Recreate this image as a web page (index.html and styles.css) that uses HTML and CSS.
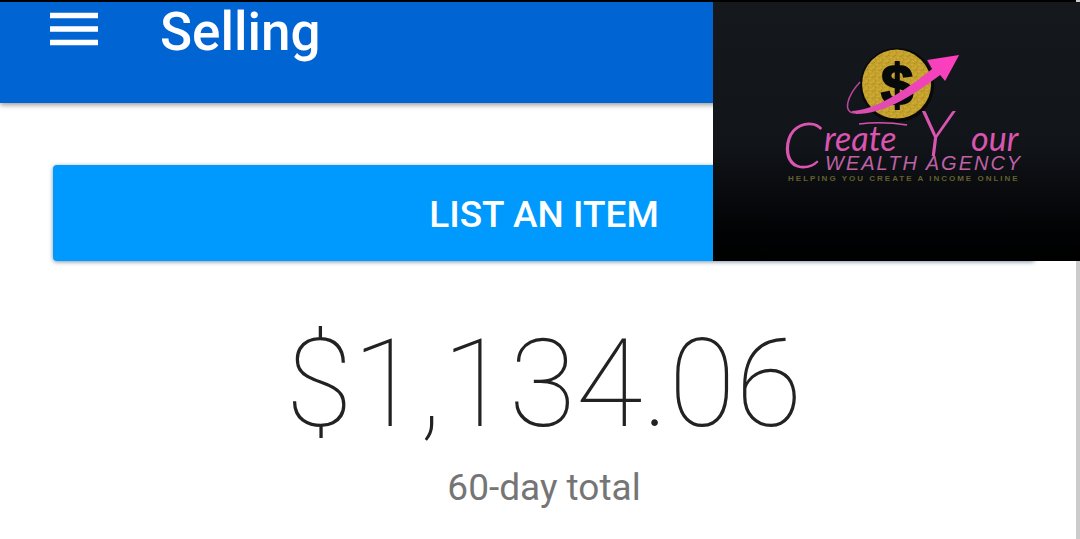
FILE: index.html
```
<!DOCTYPE html>
<html lang="en">
<head>
  <meta charset="UTF-8" />
  <meta name="viewport" content="width=device-width, initial-scale=1.0" />
  <title>Selling</title>
  <link rel="stylesheet" href="styles.css">
</head>
<body>
  <header class="app-bar">
    <button class="menu-btn" type="button" aria-label="Open menu">
      <svg viewBox="0 0 48 34" width="48" height="34" aria-hidden="true">
        <path d="M0 3.500H48M0 17H48M0 30.500H48" stroke="currentColor" stroke-width="5.500" />
      </svg>
    </button>
    <h1>Selling</h1>
  </header>

  <main class="content">
    <button class="list-btn" type="button">List an item</button>
    <p class="total">$1,134.06</p>
    <p class="total-label">60-day total</p>
  </main>

  <aside class="brand">
    <svg class="brand-logo" viewBox="713 2 367 259" role="img" aria-label="Create Your Wealth Agency">
      <defs>
        <linearGradient id="pink" x1="0" y1="1" x2="1" y2="0">
          <stop offset="0" stop-color="#d84fae" />
          <stop offset="1" stop-color="#ff3dc0" />
        </linearGradient>
        <pattern id="glitter" width="7" height="7" patternUnits="userSpaceOnUse">
          <rect width="7" height="7" fill="#c4a02c" />
          <path d="M1 1h2v1h-2zM5 3h1v2h-1zM2 5h2v1h-2z" fill="#d9bb3a" />
          <path d="M4 0h1v1h-1zM0 3h1v1h-1zM6 6h1v1h-1z" fill="#a8821f" />
        </pattern>
      </defs>

      <!-- coin -->
      <circle cx="897" cy="85" r="37" fill="#08090b" />
      <circle cx="896.500" cy="84" r="34.500" fill="url(#glitter)" />
      <text class="coin-sign" x="897" y="105" text-anchor="middle">$</text>

      <!-- rising arrow -->
      <path d="M860 82C847 96 842 113 855 113" fill="none" stroke="#b9479a" stroke-width="1.500" />
      <path d="M851 111C873 111 905 91 932 69L927 60L959 55L945 81L940 75C911 97 883 114 856 114Z" fill="url(#pink)" />

      <!-- name -->
      <text class="script script-cap" x="782" y="168">C</text>
      <text class="script" x="824" y="151">reate</text>
      <path d="M859 124Q882 121 907 125" fill="none" stroke="#d452ac" stroke-width="1.500" />
      <text class="script script-cap" x="918" y="156">Y</text>
      <text class="script" x="971" y="151">our</text>
      <text class="wealth" x="825" y="170">WEALTH AGENCY</text>
      <text class="tagline" x="788" y="181">HELPING YOU CREATE A INCOME ONLINE</text>
    </svg>
  </aside>
</body>
</html>
```
FILE: styles.css
```
* { box-sizing: border-box; }
body {
  margin: 0;
  min-height: 100vh;
  font-family: Roboto, Arial, sans-serif;
  background: #fff;
  border-right: 4px solid #ccc;
}
h1, p { margin: 0; }
button { border: 0; padding: 0; font-family: inherit; color: #fff; cursor: pointer; }

.app-bar {
  display: flex;
  align-items: flex-start;
  gap: 62px;
  height: 103px;
  margin-right: -4px;
  padding: 0 50px;
  color: #fff;
  background: #0064d2;
  border-top: 2px solid #000;
  box-shadow: 0 2px 5px rgba(0, 0, 0, 0.4);
}
.app-bar h1 { font-size: 53px; font-weight: 500; line-height: 60px; }
.menu-btn { display: flex; padding-top: 10px; background: none; }

.content {
  display: flex;
  flex-direction: column;
  padding: 62px 41px 24px 53px;
  text-align: center;
}
.list-btn {
  height: 96px;
  padding-top: 2px;
  font-size: 37px;
  font-weight: 500;
  text-transform: uppercase;
  background: #0099fd;
  border-radius: 4px;
  box-shadow: 0 1px 4px rgba(0, 40, 80, 0.5);
}
.total {
  margin-top: 52px;
  font-size: 122px;
  font-weight: 100;
  line-height: 144px;
  color: #222;
}
.total-label { margin-top: 8px; font-size: 37px; line-height: 46px; color: #757575; }

/* logo card over the top right corner */
.brand {
  position: absolute;
  top: 2px;
  right: 0;
  width: 34%;
  background: linear-gradient(#15181d, #111419 55%, #020305 88%, #000);
}
.brand-logo { display: block; width: 100%; }
.coin-sign { font: 700 58px "Liberation Sans", Arial, sans-serif; fill: #08090b; stroke: #08090b; stroke-width: 2px; }
.script { font: italic 400 34px Lato, sans-serif; fill: #d955b0; }
.script-cap { font-size: 64px; font-weight: 300; }
.wealth { font: italic 400 20px "Liberation Sans", Arial, sans-serif; letter-spacing: 2px; fill: #bd62a5; }
.tagline { font: 700 8px "Liberation Sans", Arial, sans-serif; letter-spacing: 2px; fill: #64602f; }
```
